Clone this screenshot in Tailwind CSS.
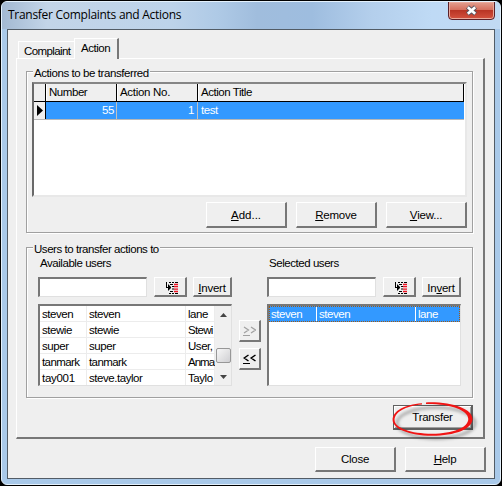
<!DOCTYPE html>
<html lang="en">
<head>
<meta charset="utf-8">
<title>Transfer Complaints and Actions</title>
<script src="https://cdn.jsdelivr.net/npm/@tailwindcss/browser@4"></script>
</head>
<body class="w-[502px] h-[486px] overflow-hidden bg-black p-px font-['Liberation_Sans',Arial,sans-serif] text-[11.5px] leading-[14px] tracking-[-0.45px] text-black">
<svg class="hidden"><symbol id="pick" viewBox="0 0 13 12"><path d="M1.500 0v6M1 5.500h5M3.500 2.500v6M4.500 3.500v4M5.500 4.500v2M4 .5h2M7 .5h2M10 .5h3M5 2.500h3M5 9.500h3M4 11.500h2M7 11.500h2M10 11.500h3" stroke="#000" fill="none"/><path d="M7 4.500h2M7 7h2" stroke="#000"/><path d="M9 2.500h4M9 4.700h4M9 7.200h4M9 9.500h4" stroke="#f01020" stroke-width="1.300"/></symbol></svg>
<div class="w-[500px] h-[484px] rounded-[6px] border border-[#e4f1fc] bg-[#a9c9e9] flex flex-col overflow-hidden">
  <header class="h-[27px] shrink-0 flex justify-between bg-[linear-gradient(90deg,#a3b9d2_0px,#c3d5e8_45px,#bdd3ea_170px,#afcae6_215px,#a0bddd_255px,#9ebddf_310px,#b4cfec_370px,#bfdaf5_430px,#c1daf3_498px)]">
    <h1 class="pl-[6px] pt-[5px] font-['Open_Sans','Noto_Sans',sans-serif] text-[12px] leading-[16px] tracking-[-0.28px] whitespace-nowrap">Transfer Complaints and Actions</h1>
    <button class="mr-[5px] -mt-px w-[47px] h-[19px] rounded-b-[4px] border border-[#5a2028] shadow-[inset_0_0_0_1px_#e9a99c] bg-[linear-gradient(#e3a091_0%,#d6705f_45%,#b93525_50%,#d4523f_100%)] flex items-center justify-center" aria-label="Close window">
      <svg class="w-[13px] h-[11px]" viewBox="0 0 13 11"><path d="M2.500 2l8 7M10.500 2l-8 7" stroke="#5b5560" stroke-width="4.600"/><path d="M2.800 2.200l7.400 6.600M10.200 2.200l-7.400 6.600" stroke="#fff" stroke-width="2.600"/></svg>
    </button>
  </header>
  <main class="ml-[5px] w-[488px] h-[450px] shrink-0 border border-[#525c66] bg-[#efefef] pl-[8px] pt-[8px] flex flex-col">
    <nav class="flex items-end h-[20px] pl-[2px]">
      <div class="w-[56px] h-[17px] border-l border-t border-white pl-[5px] pt-[2px] whitespace-nowrap tracking-[-0.6px]">Complaint</div>
      <div class="relative w-[45px] h-[21px] -mb-px border-l border-t border-white border-r-2 border-r-[#777] bg-[#efefef] pl-[6px] pt-[2px]">Action</div>
    </nav>
    <section class="w-[469px] h-[381px] border-l border-t border-white border-r-2 border-b-2 border-r-[#777] border-b-[#777] pl-[9px] pt-[12px] flex flex-col">
      <div class="relative w-[447px] h-[162px] border border-[#a0a0a0] shadow-[1px_1px_0_#fff,inset_1px_1px_0_#fff] pl-[5px] pt-[10px] flex flex-col">
        <span class="absolute left-[6px] -top-[6px] bg-[#efefef] px-px whitespace-nowrap tracking-[-0.42px]">Actions to be transferred</span>
        <div class="w-[435px] h-[115px] border-2 border-l-[#696969] border-t-[#858585] border-r-[#e8e8e8] border-b-[#e8e8e8] bg-white">
          <div class="w-[430px] flex h-[18px] bg-[#efefef] border-b border-black">
            <div class="w-[12px] border-r border-black"></div>
            <div class="w-[71px] border-r border-black border-l border-l-white pl-[2px] pt-px">Number</div>
            <div class="w-[81px] border-r border-black border-l border-l-white pl-[2px] pt-px tracking-[-0.3px]">Action No.</div>
            <div class="flex-1 border-r border-black border-l border-l-white pl-[2px] pt-px">Action Title</div>
          </div>
          <div class="w-[430px] flex h-[18px] bg-[#3399ff] border-b border-[#b8b8b8] text-white">
            <div class="w-[12px] border-r border-black bg-[#efefef] flex items-center justify-center"><svg class="w-[6px] h-[11px]" viewBox="0 0 6 11"><path d="M0 0l6 5.500-6 5.500z"/></svg></div>
            <div class="w-[71px] border-r border-[#c0c0c0] text-right pr-[2px] pt-px">55</div>
            <div class="w-[81px] border-r border-[#c0c0c0] text-right pr-[3px] pt-px">1</div>
            <div class="pl-[3px] pt-px">test</div>
          </div>
        </div>
        <div class="mt-[5px] w-[435px] flex justify-end gap-[9px] tracking-[-0.2px]">
          <button class="w-[81px] h-[26px] border border-white border-r-2 border-b-2 border-r-[#777] border-b-[#777] tracking-[0px]"><u>A</u>dd...</button>
          <button class="w-[81px] h-[26px] border border-white border-r-2 border-b-2 border-r-[#777] border-b-[#777]"><u>R</u>emove</button>
          <button class="w-[81px] h-[26px] border border-white border-r-2 border-b-2 border-r-[#777] border-b-[#777]"><u>V</u>iew...</button>
        </div>
      </div>
      <div class="relative mt-[14px] w-[447px] h-[151px] shrink-0 border border-[#a0a0a0] shadow-[1px_1px_0_#fff,inset_1px_1px_0_#fff] pl-[11px] pt-[8px] flex">
        <span class="absolute left-[6px] -top-[6px] bg-[#efefef] px-px whitespace-nowrap">Users to transfer actions to</span>
        <div class="w-[194px]">
          <div class="h-[21px] pl-[2px]">Available users</div>
          <div class="flex h-[21px]">
            <div class="w-[109px] h-[20px] bg-white border border-l-2 border-t-2 border-l-[#777] border-t-[#777] border-[#e0e0e0]"></div>
            <button class="ml-[7px] w-[33px] h-[20px] border border-white border-r-2 border-b-2 border-r-[#777] border-b-[#777] flex items-center justify-center"><svg class="w-[13px] h-[12px] mt-[2px] ml-[2px]"><use href="#pick"/></svg></button>
            <button class="ml-[6px] w-[39px] h-[20px] border border-white border-r-2 border-b-2 border-r-[#777] border-b-[#777] tracking-[-0.25px] pt-[2px]"><u>I</u>nvert</button>
          </div>
          <div class="mt-[6px] w-[194px] h-[82px] border border-l-2 border-t-2 border-l-[#777] border-t-[#777] border-[#e0e0e0] bg-white flex">
            <div class="w-[175px] grid grid-cols-[47px_99px_29px] auto-rows-[16px] overflow-hidden h-[79px] *:border-r *:border-b *:border-[#ececec] *:pl-[2px] *:pt-px *:whitespace-nowrap">
              <div>steven</div><div>steven</div><div>lane</div>
              <div>stewie</div><div>stewie</div><div class="tracking-[-0.7px]">Stewi</div>
              <div>super</div><div>super</div><div>User,</div>
              <div class="tracking-[-0.6px]">tanmark</div><div class="tracking-[-0.6px]">tanmark</div><div class="tracking-[-1px]">Anma</div>
              <div class="tracking-[-0.3px]">tay001</div><div>steve.taylor</div><div>Taylo</div>
            </div>
            <div class="w-[16px] bg-[#f0f0f0] flex flex-col items-center">
              <svg class="mt-[7px] w-[7px] h-[4px]" viewBox="0 0 7 4"><path d="M3.500 0L7 4H0z" fill="#444"/></svg>
              <div class="mt-[31px] w-[15px] h-[15px] rounded-[2px] border border-[#979797] bg-[linear-gradient(135deg,#f7f7f7,#cfcfd2)]"></div>
              <svg class="mt-[12px] w-[7px] h-[4px]" viewBox="0 0 7 4"><path d="M3.500 4L7 0H0z" fill="#444"/></svg>
            </div>
          </div>
        </div>
        <div class="ml-[7px] pt-[64px] w-[22px] flex flex-col gap-[6px]">
          <button class="w-[22px] h-[22px] border border-white border-r-2 border-b-2 border-r-[#777] border-b-[#777] flex items-center justify-center"><svg class="w-[13px] h-[11px] mt-px" viewBox="0 0 13 11"><path d="M1 1l4.500 3L1 7M8 1l4.500 3L8 7M0 9.500h7" fill="none" stroke="#a0a0a0" stroke-width="1.200"/></svg></button>
          <button class="w-[22px] h-[22px] border border-white border-r-2 border-b-2 border-r-[#777] border-b-[#777] flex items-center justify-center"><svg class="w-[13px] h-[11px] mt-px" viewBox="0 0 13 11"><path d="M5.500 1L1.200 4l4.300 3M12.500 1L8.200 4l4.300 3" fill="none" stroke="#000" stroke-width="1.500"/><path d="M0 9.500h7" stroke="#000"/></svg></button>
        </div>
        <div class="ml-[6px] w-[194px]">
          <div class="h-[21px] pl-[2px]">Selected users</div>
          <div class="flex h-[21px]">
            <div class="w-[109px] h-[20px] bg-white border border-l-2 border-t-2 border-l-[#777] border-t-[#777] border-[#e0e0e0]"></div>
            <button class="ml-[7px] w-[33px] h-[20px] border border-white border-r-2 border-b-2 border-r-[#777] border-b-[#777] flex items-center justify-center"><svg class="w-[13px] h-[12px] mt-[2px] ml-[2px]"><use href="#pick"/></svg></button>
            <button class="ml-[6px] w-[39px] h-[20px] border border-white border-r-2 border-b-2 border-r-[#777] border-b-[#777] tracking-[-0.25px] pt-[2px]">In<u>v</u>ert</button>
          </div>
          <div class="mt-[6px] w-[194px] h-[82px] border border-l-2 border-t-2 border-l-[#777] border-t-[#777] border-[#e0e0e0] bg-white">
            <div class="h-[16px] flex bg-[#3399ff] text-white border border-dotted border-[#a05a14]">
              <div class="w-[47px] border-r border-white pl-px">steven</div>
              <div class="w-[99px] border-r border-white pl-[2px]">steven</div>
              <div class="pl-[2px]">lane</div>
            </div>
          </div>
        </div>
      </div>
      <div class="relative mt-[7px] ml-[367px] w-[80px] h-[25px] shrink-0">
        <button class="w-[80px] h-[25px] border border-[#606060] border-r-2 border-b-2 shadow-[inset_1px_1px_0_#fff,inset_-1px_-1px_0_#a0a0a0] tracking-[-0.25px]">Transfer</button>
        <svg class="absolute -left-[4px] -top-[6px] w-[94px] h-[44px] overflow-visible" viewBox="389 399 94 44">
          <defs><filter id="soft" x="-20%" y="-40%" width="140%" height="180%"><feGaussianBlur stdDeviation="1.600"/></filter></defs>
          <ellipse cx="436" cy="423" rx="39" ry="15.500" fill="none" stroke="#000" stroke-opacity=".28" stroke-width="3" filter="url(#soft)"/>
          <path fill="#f01414" d="M426 402.400C452 401.500 472.500 409 472.500 419C472.500 429 455 435.800 432 435.800C409 435.800 392.600 428.500 392.600 420C392.600 411 404 404.500 422 403.200L422 404.400C405 406 394.600 412 394.600 420C394.600 428 411 433.700 432 433.700C453 433.700 468.300 427.500 468.300 419C468.300 410 450 403.600 426 404Z"/>
        </svg>
      </div>
    </section>
    <footer class="mt-[8px] w-[470px] flex justify-end gap-[9px] tracking-[-0.25px]">
      <button class="w-[81px] h-[25px] border border-white border-r-2 border-b-2 border-r-[#777] border-b-[#777]">Close</button>
      <button class="w-[81px] h-[25px] border border-white border-r-2 border-b-2 border-r-[#777] border-b-[#777]"><u>H</u>elp</button>
    </footer>
  </main>
</div>
</body>
</html>
